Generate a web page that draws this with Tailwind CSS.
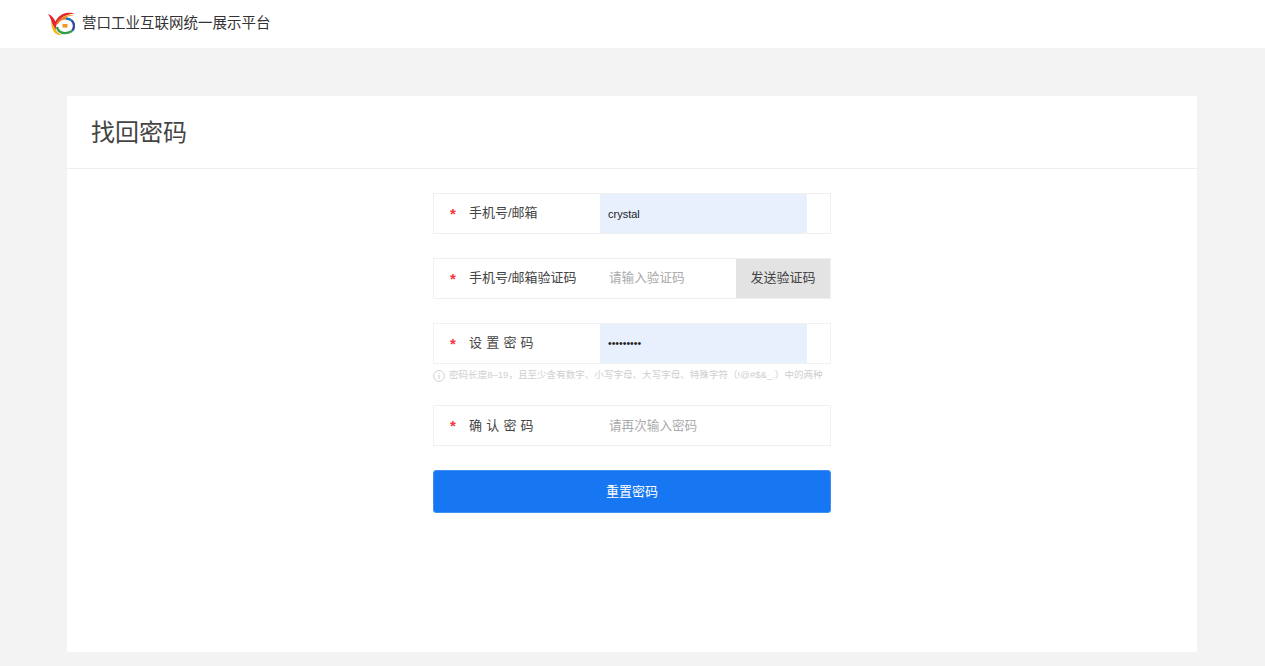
<!DOCTYPE html>
<html lang="zh-CN">
<head>
    <meta charset="UTF-8">
    <title>找回密码</title>
    <script src="https://cdn.jsdelivr.net/npm/@tailwindcss/browser@4"></script>
</head>
<body class="bg-[#f3f3f3] h-[666px] overflow-hidden font-['Liberation_Sans','Noto_Sans_CJK_SC',sans-serif]">
    <header class="bg-white h-12 flex items-center pl-12 gap-[7px]">
        <svg width="27" height="24" viewBox="0 0 27 24" class="shrink-0">
            <path d="M0 2 C3 3 6 6 7.5 9.5 C9 6 13 2 18 1 C21 .5 24 .5 26.5 2 C21 1.5 15 4 11.5 8 C8.5 11 7.5 15 8 18 C6 15 4.5 13 3.5 10 C3 7 1.5 4 0 2Z" fill="#e4232b"/>
            <path d="M14 5.5 C18 3 22 2.5 26 3.5 C22 3.5 19 4.5 16 6.5Z" fill="#f39a1c"/>
            <path d="M3.5 10 C4.5 13 6 15 8 18 C9 20 11 22 14 23 C9 23.5 6 21 4.5 17 C3.5 14.5 3.2 12 3.5 10Z" fill="#f7b512"/>
            <path d="M9 12 C10.5 8 14 6.5 18 6.5" fill="none" stroke="#e8732a" stroke-width="2"/>
            <path d="M18 6.5 C23 6.5 26 10 26 14 C26 16 25 18 24 19" fill="none" stroke="#1b74b8" stroke-width="2.4"/>
            <path d="M9 15 C10 20 16 23.5 24 19" fill="none" stroke="#2f9e48" stroke-width="2.4"/>
            <path d="M24 8.5 C26 11 26.4 15 24.5 18" fill="none" stroke="#4a3f99" stroke-width="1.6"/>
            <rect x="14.5" y="12" width="5" height="3.6" fill="#f29a1e"/>
        </svg>
        <span class="text-[14.5px] text-[#333] pb-px">营口工业互联网统一展示平台</span>
    </header>

    <main class="ml-[67px] w-[1130px] mt-12 bg-white h-[556px]">
        <div class="h-[73px] border-b border-[#eeeeee] pl-6 pt-[2px] flex items-center">
            <h1 class="text-2xl text-[#444]">找回密码</h1>
        </div>

        <form class="w-[398px] ml-[366px] pt-6 flex flex-col text-[13px]">
            <div class="h-[41px] border border-[#f0f0f0] flex items-stretch">
                <label class="w-[166px] flex items-center pl-4 pb-px text-[#444]">
                    <span class="w-[19px] text-[15px] font-bold leading-none text-[#f5363c]">*</span>手机号/邮箱
                </label>
                <input type="text" value="crystal" class="w-[207px] bg-[#e8f0fe] pl-2 pt-px text-[11px] text-[#222] outline-none">
            </div>

            <div class="mt-6 h-[41px] border border-[#f0f0f0] flex items-stretch">
                <label class="w-[166px] flex items-center pl-4 pb-px text-[#444]">
                    <span class="w-[19px] text-[15px] font-bold leading-none text-[#f5363c]">*</span>手机号/邮箱验证码
                </label>
                <input type="text" placeholder="请输入验证码" class="w-[136px] pl-[9px] text-[12.6px] outline-none placeholder:text-[#aaa]">
                <button type="button" class="flex-1 bg-[#e3e3e3] pb-px text-[#444]">发送验证码</button>
            </div>

            <div class="mt-6 h-[41px] border border-[#f0f0f0] flex items-stretch">
                <label class="w-[166px] flex items-center pl-4 pb-px text-[#444]">
                    <span class="w-[19px] text-[15px] font-bold leading-none text-[#f5363c]">*</span><span class="tracking-[4.2px]">设置密码</span>
                </label>
                <input type="password" value="crystal12" class="w-[207px] bg-[#e8f0fe] pl-2 text-[10.5px] text-[#222] outline-none">
            </div>
            <div class="h-[24px] pb-[2px] flex items-center gap-[4px] text-[9.55px] text-[#cfcfcf]">
                <svg width="12" height="12" viewBox="0 0 12 12" class="shrink-0 mt-[1px]">
                    <circle cx="6" cy="6" r="5.4" fill="none" stroke="#d0d0d0"/>
                    <path d="M6 5v4M6 3v1" stroke="#d0d0d0" stroke-width="1.1"/>
                </svg>
                <span class="whitespace-nowrap">密码长度8–19，且至少含有数字、小写字母、大写字母、特殊字符（!@#$&amp;_.）中的两种</span>
            </div>

            <div class="mt-[17px] h-[41px] border border-[#f0f0f0] flex items-stretch">
                <label class="w-[166px] flex items-center pl-4 text-[#444]">
                    <span class="w-[19px] text-[15px] font-bold leading-none text-[#f5363c]">*</span><span class="tracking-[4.2px]">确认密码</span>
                </label>
                <input type="password" placeholder="请再次输入密码" class="w-[207px] pl-[9px] pt-px text-[12.6px] outline-none placeholder:text-[#aaa]">
            </div>

            <button type="button" class="mt-6 h-[43px] bg-[#1777f2] border border-[#3f8ff5] rounded-[3px] text-white">重置密码</button>
        </form>
    </main>
</body>
</html>
